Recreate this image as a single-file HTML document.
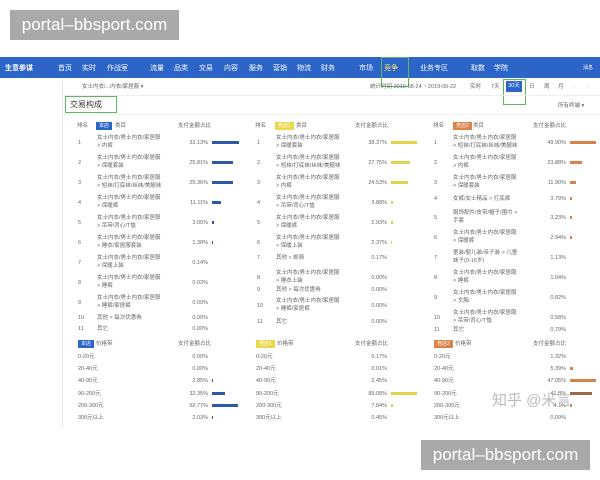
<!DOCTYPE html>
<html><head><meta charset="utf-8">
<style>
*{margin:0;padding:0;box-sizing:border-box}
body{width:600px;height:480px;background:#fff;position:relative;overflow:hidden;font-family:"Liberation Sans","Noto Sans CJK SC",sans-serif}
.a{position:absolute;white-space:nowrap}
.t{position:absolute;white-space:nowrap;font-size:5.5px;color:#666;line-height:8px}
.r{text-align:right;width:40px}
.b{position:absolute;height:3px}
.wm{position:absolute;background:#a9a9a9;color:#fff;font-size:17px;line-height:30px;text-align:center;width:169px;height:30px}
.nav{position:absolute;left:0;top:57px;width:600px;height:21px;background:#2c64c8}
.n{position:absolute;top:63px;color:#fff;font-size:7px;white-space:nowrap}
.tag{position:absolute;font-size:5px;color:#fff;padding:0 3px;line-height:8px;height:8px}
</style></head><body>
<div class="wm" style="left:10px;top:10px">portal–bbsport.com</div>
<div class="nav"></div>
<div class="n" style="left:5px;font-weight:bold">生意参谋</div>
<div class="n" style="left:58px">首页</div><div class="n" style="left:82px">实时</div><div class="n" style="left:107px">作战室</div>
<div class="n" style="left:150px">流量</div><div class="n" style="left:174px">品类</div><div class="n" style="left:199px">交易</div><div class="n" style="left:224px">内容</div><div class="n" style="left:249px">服务</div><div class="n" style="left:273px">营销</div><div class="n" style="left:297px">物流</div><div class="n" style="left:321px">财务</div>
<div class="n" style="left:359px">市场</div><div class="n" style="left:384px;color:#ffeb70">竞争</div><div class="n" style="left:420px">业务专区</div><div class="n" style="left:471px">取数</div><div class="n" style="left:494px">学院</div><div class="n" style="left:583px;font-size:5px;top:64px">消息</div>
<div class="a" style="left:381px;top:57px;width:28px;height:30px;border:1px solid #5cb85c"></div>
<div class="a" style="left:62px;top:78px;width:1px;height:350px;background:#e8e8e8"></div>
<div class="t" style="left:82px;top:83px">女士内衣/...内衣/家居服 ▾</div>
<div class="t" style="left:370px;top:83px">统计时间 2019-08-24 ~ 2019-09-22</div>
<div class="t" style="left:470px;top:83px">实时</div><div class="t" style="left:491px;top:83px">7天</div>
<div class="a" style="left:506px;top:81px;width:16px;height:11px;background:#2c64c8;color:#fff;font-size:5.5px;line-height:11px;text-align:center">30天</div>
<div class="a" style="left:503px;top:79px;width:23px;height:26px;border:1px solid #5cb85c"></div>
<div class="t" style="left:529px;top:83px">日</div><div class="t" style="left:544px;top:83px">周</div><div class="t" style="left:558px;top:83px">月</div><div class="t" style="left:573px;top:83px;color:#ccc">‹</div><div class="t" style="left:587px;top:83px;color:#ccc">›</div>
<div class="a" style="left:63px;top:95px;width:537px;height:1px;background:#eee"></div>
<div class="a" style="left:65px;top:96px;width:52px;height:17px;border:1px solid #5cb85c;font-size:8px;color:#333;line-height:15px;padding-left:4px">交易构成</div>
<div class="t" style="left:558px;top:102px">所有终端 ▾</div>
<div class="a" style="left:63px;top:114px;width:537px;height:1px;background:#f2f2f2"></div>

<!-- column headers -->
<div class="t" style="left:77px;top:122px">排名</div><div class="tag" style="left:96px;top:122px;background:#2c64c8">本店</div><div class="t" style="left:115px;top:122px">类目</div><div class="t" style="left:178px;top:122px">支付金额占比</div>
<div class="t" style="left:255px;top:122px">排名</div><div class="tag" style="left:275px;top:122px;background:#e8d84a">竞店1</div><div class="t" style="left:296px;top:122px">类目</div><div class="t" style="left:355px;top:122px">支付金额占比</div>
<div class="t" style="left:433px;top:122px">排名</div><div class="tag" style="left:453px;top:122px;background:#d9824a">竞店2</div><div class="t" style="left:473px;top:122px">类目</div><div class="t" style="left:533px;top:122px">支付金额占比</div>

<!-- col1 -->
<div class="t" style="left:78px;top:139px">1</div><div class="t" style="left:97px;top:134px">女士内衣/男士内衣/家居服<br>&gt; 内裤</div><div class="t r" style="left:168px;top:139px">33.13%</div><div class="b" style="left:212px;top:141px;width:27px;background:#2c5aa8"></div>
<div class="t" style="left:78px;top:159px">2</div><div class="t" style="left:97px;top:154px">女士内衣/男士内衣/家居服<br>&gt; 保暖套装</div><div class="t r" style="left:168px;top:159px">25.81%</div><div class="b" style="left:212px;top:161px;width:21px;background:#2c5aa8"></div>
<div class="t" style="left:78px;top:179px">3</div><div class="t" style="left:97px;top:174px">女士内衣/男士内衣/家居服<br>&gt; 短袜/打底袜/丝袜/美腿袜</div><div class="t r" style="left:168px;top:179px">25.36%</div><div class="b" style="left:212px;top:181px;width:21px;background:#2c5aa8"></div>
<div class="t" style="left:78px;top:199px">4</div><div class="t" style="left:97px;top:194px">女士内衣/男士内衣/家居服<br>&gt; 保暖裤</div><div class="t r" style="left:168px;top:199px">11.11%</div><div class="b" style="left:212px;top:201px;width:9px;background:#2c5aa8"></div>
<div class="t" style="left:78px;top:219px">5</div><div class="t" style="left:97px;top:214px">女士内衣/男士内衣/家居服<br>&gt; 吊带/背心/T恤</div><div class="t r" style="left:168px;top:219px">3.05%</div><div class="b" style="left:212px;top:221px;width:2px;background:#2c5aa8"></div>
<div class="t" style="left:78px;top:239px">6</div><div class="t" style="left:97px;top:234px">女士内衣/男士内衣/家居服<br>&gt; 睡衣/家居服套装</div><div class="t r" style="left:168px;top:239px">1.38%</div><div class="b" style="left:212px;top:241px;width:1px;background:#2c5aa8"></div>
<div class="t" style="left:78px;top:259px">7</div><div class="t" style="left:97px;top:254px">女士内衣/男士内衣/家居服<br>&gt; 保暖上装</div><div class="t r" style="left:168px;top:259px">0.14%</div>
<div class="t" style="left:78px;top:279px">8</div><div class="t" style="left:97px;top:274px">女士内衣/男士内衣/家居服<br>&gt; 睡裤</div><div class="t r" style="left:168px;top:279px">0.03%</div>
<div class="t" style="left:78px;top:299px">9</div><div class="t" style="left:97px;top:294px">女士内衣/男士内衣/家居服<br>&gt; 睡裤/家居裤</div><div class="t r" style="left:168px;top:299px">0.00%</div>
<div class="t" style="left:78px;top:314px">10</div><div class="t" style="left:97px;top:314px">其他 &gt; 每次优惠券</div><div class="t r" style="left:168px;top:314px">0.00%</div>
<div class="t" style="left:78px;top:325px">11</div><div class="t" style="left:97px;top:325px">其它</div><div class="t r" style="left:168px;top:325px">0.00%</div>

<!-- col2 -->
<div class="t" style="left:257px;top:139px">1</div><div class="t" style="left:276px;top:134px">女士内衣/男士内衣/家居服<br>&gt; 保暖套装</div><div class="t r" style="left:347px;top:139px">38.37%</div><div class="b" style="left:391px;top:141px;width:26px;background:#e3d34a"></div>
<div class="t" style="left:257px;top:159px">2</div><div class="t" style="left:276px;top:154px">女士内衣/男士内衣/家居服<br>&gt; 短袜/打底袜/丝袜/美腿袜</div><div class="t r" style="left:347px;top:159px">27.75%</div><div class="b" style="left:391px;top:161px;width:19px;background:#e3d34a"></div>
<div class="t" style="left:257px;top:179px">3</div><div class="t" style="left:276px;top:174px">女士内衣/男士内衣/家居服<br>&gt; 内裤</div><div class="t r" style="left:347px;top:179px">24.53%</div><div class="b" style="left:391px;top:181px;width:17px;background:#e3d34a"></div>
<div class="t" style="left:257px;top:199px">4</div><div class="t" style="left:276px;top:194px">女士内衣/男士内衣/家居服<br>&gt; 吊带/背心/T恤</div><div class="t r" style="left:347px;top:199px">3.88%</div><div class="b" style="left:391px;top:201px;width:2px;background:#cbd34a"></div>
<div class="t" style="left:257px;top:219px">5</div><div class="t" style="left:276px;top:214px">女士内衣/男士内衣/家居服<br>&gt; 保暖裤</div><div class="t r" style="left:347px;top:219px">2.93%</div><div class="b" style="left:391px;top:221px;width:2px;background:#cbd34a"></div>
<div class="t" style="left:257px;top:239px">6</div><div class="t" style="left:276px;top:234px">女士内衣/男士内衣/家居服<br>&gt; 保暖上装</div><div class="t r" style="left:347px;top:239px">2.37%</div><div class="b" style="left:391px;top:241px;width:1px;background:#cbd34a"></div>
<div class="t" style="left:257px;top:254px">7</div><div class="t" style="left:276px;top:254px">其他 &gt; 邮费</div><div class="t r" style="left:347px;top:254px">0.17%</div>
<div class="t" style="left:257px;top:274px">8</div><div class="t" style="left:276px;top:269px">女士内衣/男士内衣/家居服<br>&gt; 睡衣上装</div><div class="t r" style="left:347px;top:274px">0.00%</div>
<div class="t" style="left:257px;top:286px">9</div><div class="t" style="left:276px;top:286px">其他 &gt; 每次优惠券</div><div class="t r" style="left:347px;top:286px">0.00%</div>
<div class="t" style="left:257px;top:302px">10</div><div class="t" style="left:276px;top:297px">女士内衣/男士内衣/家居服<br>&gt; 睡裤/家居裤</div><div class="t r" style="left:347px;top:302px">0.00%</div>
<div class="t" style="left:257px;top:318px">11</div><div class="t" style="left:276px;top:318px">其它</div><div class="t r" style="left:347px;top:318px">0.00%</div>

<!-- col3 -->
<div class="t" style="left:434px;top:139px">1</div><div class="t" style="left:453px;top:134px">女士内衣/男士内衣/家居服<br>&gt; 短袜/打底袜/丝袜/美腿袜</div><div class="t r" style="left:526px;top:139px">49.90%</div><div class="b" style="left:570px;top:141px;width:26px;background:#d9824a"></div>
<div class="t" style="left:434px;top:159px">2</div><div class="t" style="left:453px;top:154px">女士内衣/男士内衣/家居服<br>&gt; 内裤</div><div class="t r" style="left:526px;top:159px">23.88%</div><div class="b" style="left:570px;top:161px;width:12px;background:#d9824a"></div>
<div class="t" style="left:434px;top:179px">3</div><div class="t" style="left:453px;top:174px">女士内衣/男士内衣/家居服<br>&gt; 保暖套装</div><div class="t r" style="left:526px;top:179px">11.90%</div><div class="b" style="left:570px;top:181px;width:6px;background:#d9824a"></div>
<div class="t" style="left:434px;top:195px">4</div><div class="t" style="left:453px;top:195px">女裤/女士精品 &gt; 打底裤</div><div class="t r" style="left:526px;top:195px">3.79%</div><div class="b" style="left:570px;top:197px;width:2px;background:#d9824a"></div>
<div class="t" style="left:434px;top:214px">5</div><div class="t" style="left:453px;top:209px">服饰配件/皮带/帽子/围巾 &gt;<br>手套</div><div class="t r" style="left:526px;top:214px">3.23%</div><div class="b" style="left:570px;top:216px;width:2px;background:#d9824a"></div>
<div class="t" style="left:434px;top:234px">6</div><div class="t" style="left:453px;top:229px">女士内衣/男士内衣/家居服<br>&gt; 保暖裤</div><div class="t r" style="left:526px;top:234px">2.94%</div><div class="b" style="left:570px;top:236px;width:2px;background:#d9824a"></div>
<div class="t" style="left:434px;top:254px">7</div><div class="t" style="left:453px;top:249px">童装/婴儿装/亲子装 &gt; 儿童<br>袜子(0-16岁)</div><div class="t r" style="left:526px;top:254px">1.13%</div>
<div class="t" style="left:434px;top:274px">8</div><div class="t" style="left:453px;top:269px">女士内衣/男士内衣/家居服<br>&gt; 睡裤</div><div class="t r" style="left:526px;top:274px">1.04%</div>
<div class="t" style="left:434px;top:294px">9</div><div class="t" style="left:453px;top:289px">女士内衣/男士内衣/家居服<br>&gt; 文胸</div><div class="t r" style="left:526px;top:294px">0.82%</div>
<div class="t" style="left:434px;top:314px">10</div><div class="t" style="left:453px;top:309px">女士内衣/男士内衣/家居服<br>&gt; 吊带/背心/T恤</div><div class="t r" style="left:526px;top:314px">0.58%</div>
<div class="t" style="left:434px;top:326px">11</div><div class="t" style="left:453px;top:326px">其它</div><div class="t r" style="left:526px;top:326px">0.79%</div>

<!-- price headers -->
<div class="tag" style="left:78px;top:340px;background:#2c64c8">本店</div><div class="t" style="left:96px;top:340px">价格带</div><div class="t" style="left:178px;top:340px">支付金额占比</div>
<div class="tag" style="left:256px;top:340px;background:#e8d84a">竞店1</div><div class="t" style="left:277px;top:340px">价格带</div><div class="t" style="left:355px;top:340px">支付金额占比</div>
<div class="tag" style="left:434px;top:340px;background:#d9824a">竞店2</div><div class="t" style="left:455px;top:340px">价格带</div><div class="t" style="left:533px;top:340px">支付金额占比</div>

<!-- price rows -->
<div class="t" style="left:78px;top:353px">0-20元</div><div class="t r" style="left:168px;top:353px">0.00%</div>
<div class="t" style="left:78px;top:365px">20-40元</div><div class="t r" style="left:168px;top:365px">0.00%</div>
<div class="t" style="left:78px;top:377px">40-90元</div><div class="t r" style="left:168px;top:377px">2.85%</div><div class="b" style="left:212px;top:379px;width:1px;background:#2c5aa8"></div>
<div class="t" style="left:78px;top:390px">90-200元</div><div class="t r" style="left:168px;top:390px">32.35%</div><div class="b" style="left:212px;top:392px;width:13px;background:#2c5aa8"></div>
<div class="t" style="left:78px;top:402px">200-300元</div><div class="t r" style="left:168px;top:402px">62.77%</div><div class="b" style="left:212px;top:404px;width:26px;background:#2c5aa8"></div>
<div class="t" style="left:78px;top:414px">300元以上</div><div class="t r" style="left:168px;top:414px">2.03%</div><div class="b" style="left:212px;top:416px;width:1px;background:#2c5aa8"></div>

<div class="t" style="left:256px;top:353px">0-20元</div><div class="t r" style="left:347px;top:353px">0.17%</div>
<div class="t" style="left:256px;top:365px">20-40元</div><div class="t r" style="left:347px;top:365px">0.01%</div>
<div class="t" style="left:256px;top:377px">40-90元</div><div class="t r" style="left:347px;top:377px">2.45%</div>
<div class="t" style="left:256px;top:390px">90-200元</div><div class="t r" style="left:347px;top:390px">89.08%</div><div class="b" style="left:391px;top:392px;width:26px;background:#e3d34a"></div>
<div class="t" style="left:256px;top:402px">200-300元</div><div class="t r" style="left:347px;top:402px">7.84%</div><div class="b" style="left:391px;top:404px;width:2px;background:#cbd34a"></div>
<div class="t" style="left:256px;top:414px">300元以上</div><div class="t r" style="left:347px;top:414px">0.45%</div>

<div class="t" style="left:434px;top:353px">0-20元</div><div class="t r" style="left:526px;top:353px">1.32%</div>
<div class="t" style="left:434px;top:365px">20-40元</div><div class="t r" style="left:526px;top:365px">5.39%</div><div class="b" style="left:570px;top:367px;width:3px;background:#d9824a"></div>
<div class="t" style="left:434px;top:377px">40-90元</div><div class="t r" style="left:526px;top:377px">47.05%</div><div class="b" style="left:570px;top:379px;width:26px;background:#d9824a"></div>
<div class="t" style="left:434px;top:390px">90-200元</div><div class="t r" style="left:526px;top:390px">41.8%</div><div class="b" style="left:570px;top:392px;width:22px;background:#9a6a4a"></div>
<div class="t" style="left:434px;top:402px">200-300元</div><div class="t r" style="left:526px;top:402px">4.1%</div><div class="b" style="left:570px;top:404px;width:2px;background:#d9824a"></div>
<div class="t" style="left:434px;top:414px">300元以上</div><div class="t r" style="left:526px;top:414px">0.09%</div>

<div class="a" style="left:492px;top:389px;font-size:15px;color:#bbb">知乎 @米言</div>

<div class="wm" style="left:421px;top:440px">portal–bbsport.com</div>
</body></html>
